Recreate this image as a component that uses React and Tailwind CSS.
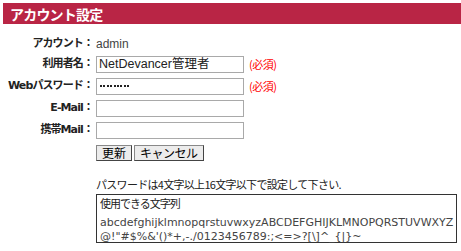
import React from "react";

const font = { fontFamily: '"Noto Sans CJK JP", "DejaVu Sans", sans-serif' };
const latin = { fontFamily: '"Liberation Sans", "Noto Sans CJK JP", sans-serif' };
const labelFont = { fontFamily: '"DejaVu Sans", "Noto Sans CJK JP", sans-serif' };

function Label({ h, children }) {
  return (
    <div
      className={`${h} flex items-center justify-end pr-[3px] text-[11px] font-bold text-[#222] whitespace-nowrap tracking-[-0.9px]`}
      style={labelFont}
    >
      {children}
    </div>
  );
}

function Req() {
  return <span className="ml-[5px] text-[11px] text-[#ff0000] tracking-[-0.5px]">(必須)</span>;
}

function Dots() {
  return (
    <div className="flex items-center gap-[1.4px]">
      {[0, 1, 2, 3, 4, 5, 6, 7, 8].map((i) => (
        <div key={i} className="w-[2px] h-[2px] bg-[#222]" />
      ))}
    </div>
  );
}

export default function App() {
  return (
    <div className="w-[461px] h-[251px] bg-white overflow-hidden" style={font}>
      <div className="pt-[3px] pl-[3px]">
        <div className="h-[21px] bg-[#b92545] flex items-center pl-[7px]">
          <span className="text-white font-bold text-[14px] leading-none tracking-[-0.8px]">アカウント設定</span>
        </div>
      </div>

      <div className="grid grid-cols-[96px_auto] mt-[11px]">
        <Label h="h-[18px]">アカウント：</Label>
        <div className="h-[18px] flex items-center text-[12px] text-[#444]" style={latin}>admin</div>

        <Label h="h-[22px]">利用者名：</Label>
        <div className="h-[22px] flex items-center">
          <input
            readOnly
            value="NetDevancer管理者"
            className="w-[148px] h-[17px] border border-[#a9a9a9] px-[2px] text-[12.5px] text-[#222] outline-none"
            style={latin}
          />
          <Req />
        </div>

        <Label h="h-[22px]">Webパスワード：</Label>
        <div className="h-[22px] flex items-center">
          <div className="w-[148px] h-[17px] border border-[#a9a9a9] px-[3px] flex items-center">
            <Dots />
          </div>
          <Req />
        </div>

        <Label h="h-[22px]">E-Mail：</Label>
        <div className="h-[22px] flex items-center">
          <input readOnly className="w-[148px] h-[17px] border border-[#a9a9a9] outline-none" />
        </div>

        <Label h="h-[22px]">携帯Mail：</Label>
        <div className="h-[22px] flex items-center">
          <input readOnly className="w-[148px] h-[17px] border border-[#a9a9a9] outline-none" />
        </div>

        <div />
        <div className="h-[24px] flex items-center gap-[2px]">
          <button className="h-[16px] px-[5px] bg-[#ececec] border border-[#444] border-t-[#888] border-l-[#888] text-[12px] leading-none text-black flex items-center">
            更新
          </button>
          <button className="h-[16px] px-[5px] bg-[#ececec] border border-[#444] border-t-[#888] border-l-[#888] text-[12px] leading-none text-black flex items-center tracking-[-0.5px]">
            キャンセル
          </button>
        </div>
      </div>

      <div className="ml-[96px] mt-[14px] text-[11px] text-[#222] leading-none tracking-[-0.7px]">
        パスワードは4文字以上16文字以下で設定して下さい.
      </div>
      <div className="ml-[96px] mt-[4px] w-[361px] h-[49px] border border-[#333] px-[3px] pt-[1px]">
        <div className="text-[11px] text-[#222] leading-[14px] tracking-[-1px]">使用できる文字列</div>
        <div className="mt-[6px] text-[11px] text-[#444] leading-[14px] whitespace-nowrap" style={{ fontFamily: '"DejaVu Sans", sans-serif' }}>
          <div>abcdefghijklmnopqrstuvwxyzABCDEFGHIJKLMNOPQRSTUVWXYZ</div>
          <div>@!"#$%&amp;'()*+,-./0123456789:;&lt;=&gt;?[\]^_{"{"}|{"}"}~</div>
        </div>
      </div>
    </div>
  );
}
